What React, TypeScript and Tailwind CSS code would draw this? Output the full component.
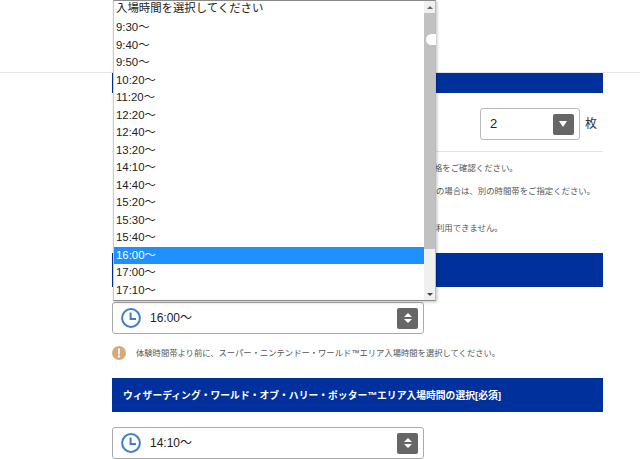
import React from 'react';

const FONT = "font-['Liberation_Sans','Noto_Sans_CJK_JP',sans-serif]";

const times = [
  '9:30～', '9:40～', '9:50～', '10:20～', '11:20～', '12:20～', '12:40～', '13:20～',
  '14:10～', '14:40～', '15:20～', '15:30～', '15:40～', '16:00～', '17:00～', '17:10～',
];

const ClockIcon = () => (
  <svg viewBox="0 0 20 20" className="w-5 h-5 shrink-0" fill="none" stroke="#3f7fc9" strokeWidth="2">
    <circle cx="10" cy="10" r="8.9" />
    <path d="M9.6 4.4V11H15" />
  </svg>
);

const Warning = () => (
  <svg viewBox="0 0 14 14" className="w-[14px] h-[14px] shrink-0">
    <circle cx="7" cy="7" r="7" fill="#d8a878" />
    <path d="M5.9 2.6h2.2L7.7 8.4H6.3Z" fill="#fff" />
    <circle cx="7" cy="10.4" r="1.2" fill="#fff" />
  </svg>
);

const TimeSelect = ({ value }: { value: string }) => (
  <div className="flex items-center w-[312px] h-[32px] border-[1.5px] border-[#aaa] rounded-[3px] pl-[8px] pr-[5px] bg-white">
    <ClockIcon />
    <span className="ml-[9px] text-[12px] text-[#222]">{value}</span>
    <div className="ml-auto w-[21px] h-[21px] rounded-[2px] bg-[#666] flex flex-col items-center justify-center gap-[2px]">
      <div className="w-0 h-0 border-x-[4px] border-x-transparent border-b-[4px] border-b-white" />
      <div className="w-0 h-0 border-x-[4px] border-x-transparent border-t-[4px] border-t-white" />
    </div>
  </div>
);

export default function App() {
  return (
    <div className={`relative w-[640px] h-[459px] overflow-hidden bg-white ${FONT}`}>
      <header className="h-[73px] border-b border-[#e6e6e6] bg-white" />

      <main className="ml-[112px] w-[491px]">
        <div className="h-[20px] bg-[#00309b]" />

        <div className="flex items-center justify-end mt-[15px] h-[32px] pr-[6px]">
          <div className="flex items-center w-[100px] h-[32px] border-[1.5px] border-[#bbb] rounded-[3px] pl-[9px] pr-[5px]">
            <span className="text-[13px] text-[#222]">2</span>
            <div className="ml-auto w-[21px] h-[21px] rounded-[2px] bg-[#666] flex items-center justify-center">
              <div className="w-0 h-0 border-x-[4px] border-x-transparent border-t-[6px] border-t-white" />
            </div>
          </div>
          <span className="ml-[5px] text-[12px] text-[#333]">枚</span>
        </div>

        <div className="mt-[11px] border-t border-[#e4e4e4]" />

        {/* start of these three lines sits behind the open list */}
        <div className="mt-[9px] pl-[322px] text-[8.4px] leading-[14px] text-[#555] whitespace-nowrap">格をご確認ください。</div>
        <div className="mt-[9px] pl-[324px] text-[8.4px] leading-[14px] text-[#555] whitespace-nowrap">の場合は、別の時間帯をご指定ください。</div>
        <div className="mt-[23px] pl-[324px] text-[8.4px] leading-[14px] text-[#555] whitespace-nowrap">利用できません。</div>

        <div className="mt-[18px] h-[34px] bg-[#00309b]" />

        <div className="mt-[15px]">
          <TimeSelect value="16:00～" />
        </div>

        <div className="mt-[12px] flex items-center gap-[10px] text-[8.3px] leading-[14px] text-[#555] whitespace-nowrap">
          <Warning />
          <span>体験時間帯より前に、スーパー・ニンテンドー・ワールド™エリア入場時間を選択してください。</span>
        </div>

        <div className="mt-[18px] h-[34px] pt-[2px] bg-[#00309b] flex items-center pl-[11px] text-[9.8px] font-bold text-white whitespace-nowrap">
          ウィザーディング・ワールド・オブ・ハリー・ポッター™エリア入場時間の選択[必須]
        </div>

        <div className="mt-[15px]">
          <TimeSelect value="14:10～" />
        </div>
      </main>

      {/* open native-style dropdown list */}
      <div className="absolute left-[113px] top-0 w-[323px] h-[301px] bg-white border border-[#8a8a8a] border-l-[#ccc] border-r-[#bbb] shadow-[1px_1px_3px_rgba(0,0,0,0.25)] flex">
        <ul className="flex-1 text-[11.4px] text-[#222]">
          <li className="h-[18px] pl-[2px] leading-[15px]">入場時間を選択してください</li>
          {times.map((t) => (
            <li
              key={t}
              className={`h-[17.53px] pl-[2px] leading-[17.5px] ${t === '16:00～' ? 'bg-[#1e90ff] text-white' : ''}`}
            >
              {t}
            </li>
          ))}
        </ul>
        <div className="relative w-[11px] bg-[#f0f0f0] flex flex-col items-center">
          <div className="h-[12px] flex items-center justify-center">
            <div className="w-0 h-0 border-x-[3px] border-x-transparent border-b-[3px] border-b-[#666]" />
          </div>
          <div className="w-full h-[236px] bg-[#c1c1c1]" />
          <div className="absolute left-[2px] top-[33px] w-[10px] h-[11px] rounded-l-full bg-white" />
          <div className="mt-auto h-[12px] flex items-center justify-center">
            <div className="w-0 h-0 border-x-[3px] border-x-transparent border-t-[3px] border-t-[#444]" />
          </div>
        </div>
      </div>
    </div>
  );
}
